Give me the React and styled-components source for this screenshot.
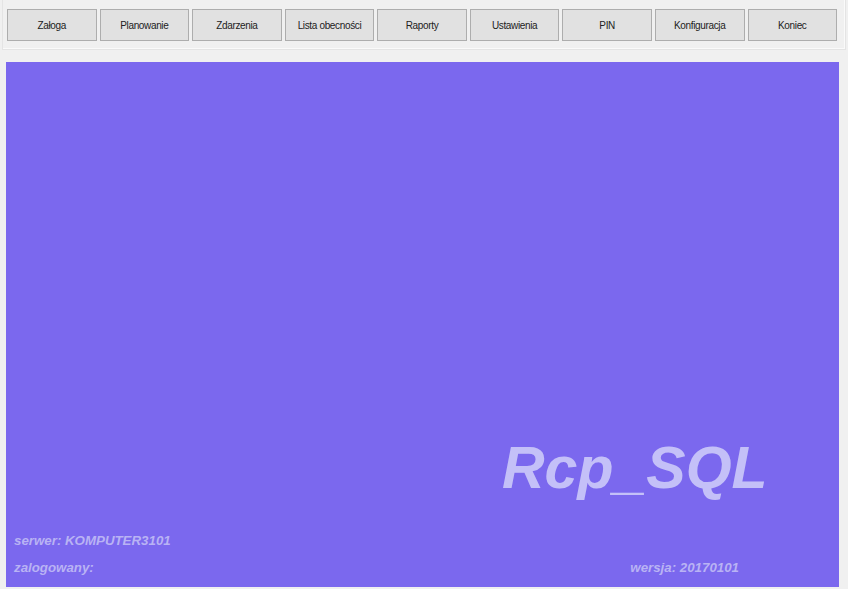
import React from "react";
import styled, { createGlobalStyle } from "styled-components";

const buttons = [
  "Załoga",
  "Planowanie",
  "Zdarzenia",
  "Lista obecności",
  "Raporty",
  "Ustawienia",
  "PIN",
  "Konfiguracja",
  "Koniec",
];

function App() {
  return (
    <Window>
      <GlobalStyle />
      <Toolbar>
        {buttons.map((b) => (
          <Button key={b}>{b}</Button>
        ))}
      </Toolbar>
      <Stage>
        <Title>Rcp_SQL</Title>
        <InfoRow>
          <Info>serwer: KOMPUTER3101</Info>
        </InfoRow>
        <InfoRow>
          <Info>zalogowany:</Info>
          <Info $right>wersja: 20170101</Info>
        </InfoRow>
      </Stage>
    </Window>
  );
}

const GlobalStyle = createGlobalStyle`
  html, body {
    margin: 0;
    padding: 0;
    background: #f0f0f0;
  }
`;

const Window = styled.div`
  width: 848px;
  height: 589px;
  background: #f0f0f0;
  font-family: "Liberation Sans", Arial, sans-serif;
  display: flex;
  flex-direction: column;
  overflow: hidden;
`;

const Toolbar = styled.div`
  height: 50px;
  margin: 0 2px;
  border: 1px solid #e4e4e4;
  border-top: none;
  box-shadow: inset -1px -1px 0 #fafafa;
  display: flex;
  gap: 3px;
  padding: 9px 8px 0 4px;
  box-sizing: border-box;
  align-items: flex-start;
`;

const Button = styled.div`
  flex: 1;
  height: 32px;
  box-sizing: border-box;
  background: #e1e1e1;
  border: 1px solid #adadad;
  font-size: 10px;
  letter-spacing: -0.35px;
  color: #222;
  display: flex;
  align-items: center;
  justify-content: center;
`;

const Stage = styled.div`
  margin: 12px 9px 2px 6px;
  height: 525px;
  background: #7b68ee;
  display: flex;
  flex-direction: column;
  justify-content: flex-end;
  padding-bottom: 6px;
  box-sizing: border-box;
`;

const Title = styled.div`
  font-size: 59px;
  font-weight: bold;
  font-style: italic;
  color: #c4c0f8;
  margin: 0 0 29px 496px;
  line-height: 1;
`;

const InfoRow = styled.div`
  display: flex;
  height: 27px;
  align-items: center;
  padding-left: 8px;
`;

const Info = styled.div`
  font-size: 13.3px;
  font-weight: bold;
  font-style: italic;
  color: #b9b3f4;
  margin-left: ${(p) => (p.$right ? "auto" : "0")};
  margin-right: ${(p) => (p.$right ? "100px" : "0")};
`;

export default App;
